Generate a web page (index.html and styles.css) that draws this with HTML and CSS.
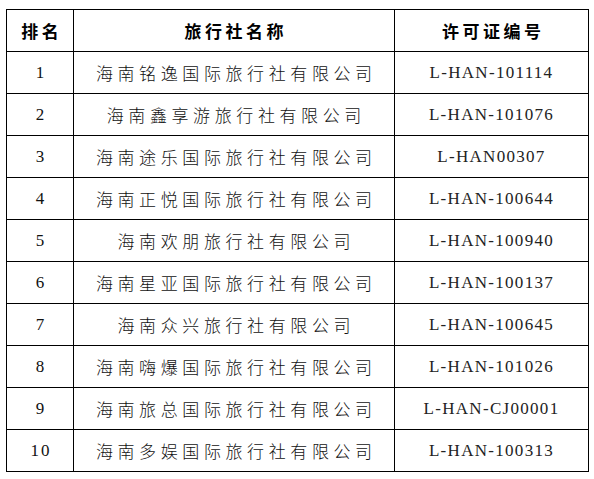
FILE: index.html
```html
<!DOCTYPE html>
<html lang="zh-CN">
<head>
<meta charset="utf-8">
<title>旅行社名单</title>
<link rel="stylesheet" href="styles.css">
</head>
<body>
<table class="list">
  <colgroup>
    <col class="c-rank">
    <col class="c-name">
    <col class="c-code">
  </colgroup>
  <thead>
    <tr><th>排名</th><th>旅行社名称</th><th>许可证编号</th></tr>
  </thead>
  <tbody>
    <tr><td class="num">1</td><td class="name">海南铭逸国际旅行社有限公司</td><td class="code">L-HAN-101114</td></tr>
    <tr><td class="num">2</td><td class="name">海南鑫享游旅行社有限公司</td><td class="code">L-HAN-101076</td></tr>
    <tr><td class="num">3</td><td class="name">海南途乐国际旅行社有限公司</td><td class="code">L-HAN00307</td></tr>
    <tr><td class="num">4</td><td class="name">海南正悦国际旅行社有限公司</td><td class="code">L-HAN-100644</td></tr>
    <tr><td class="num">5</td><td class="name">海南欢朋旅行社有限公司</td><td class="code">L-HAN-100940</td></tr>
    <tr><td class="num">6</td><td class="name">海南星亚国际旅行社有限公司</td><td class="code">L-HAN-100137</td></tr>
    <tr><td class="num">7</td><td class="name">海南众兴旅行社有限公司</td><td class="code">L-HAN-100645</td></tr>
    <tr><td class="num">8</td><td class="name">海南嗨爆国际旅行社有限公司</td><td class="code">L-HAN-101026</td></tr>
    <tr><td class="num">9</td><td class="name">海南旅总国际旅行社有限公司</td><td class="code">L-HAN-CJ00001</td></tr>
    <tr><td class="num">10</td><td class="name">海南多娱国际旅行社有限公司</td><td class="code">L-HAN-100313</td></tr>
  </tbody>
</table>
</body>
</html>
```
FILE: styles.css
```css
html, body {
  margin: 0;
  padding: 0;
  background: #fff;
}
body {
  padding: 9px 0 0 6px;
  color: #111;
  font-family: "Noto Sans CJK SC", "Liberation Serif", serif;
}
.list {
  border-collapse: collapse;
  table-layout: fixed;
  width: 582px;
}
.c-rank { width: 67px; }
.c-name { width: 321px; }
.c-code { width: 194px; }
.list th,
.list td {
  border: 1.5px solid #000;
  height: 42px;
  padding: 0;
  text-align: center;
  vertical-align: middle;
  box-sizing: border-box;
  white-space: nowrap;
}
.list th {
  font-family: "Noto Sans CJK SC", sans-serif;
  font-weight: 700;
  font-size: 17px;
  letter-spacing: 3.5px;
  text-indent: 3.5px;
  color: #000;
}
.list td.name {
  font-family: "Noto Sans CJK SC", sans-serif;
  font-weight: 300;
  font-size: 17px;
  letter-spacing: 4.6px;
  text-indent: 4.6px;
}
.list td.num {
  font-family: "Liberation Serif", serif;
  font-size: 17px;
  letter-spacing: 2px;
  text-indent: 2px;
}
.list td.code {
  font-family: "Liberation Serif", serif;
  font-size: 17px;
  letter-spacing: 1.3px;
  color: #222;
}
```
